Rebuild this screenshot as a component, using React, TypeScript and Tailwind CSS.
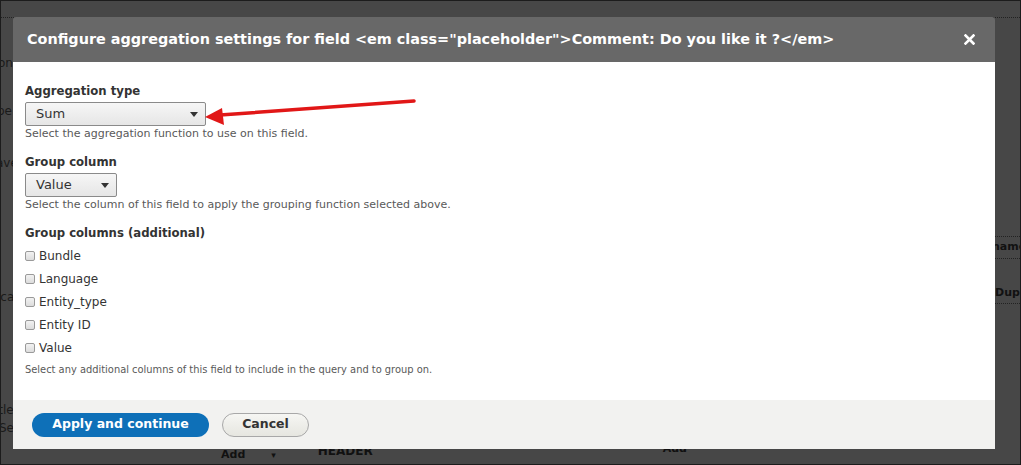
import React from 'react'

const CHECKBOXES = ['Bundle', 'Language', 'Entity_type', 'Entity ID', 'Value']

function SelectBox({ value, width }: { value: string; width: string }) {
  return (
    <div
      className={`${width} h-[24px] flex items-center justify-between pl-[10px] pr-[7px] border border-[#8a8a8a] rounded-[2px] bg-gradient-to-b from-[#f6f6f6] to-[#e6e6e6] text-[13px] text-[#333]`}
    >
      <span>{value}</span>
      <svg className="w-[8px] h-[5px]" viewBox="0 0 8 5">
        <path d="M0 0h8L4 5z" fill="#333" />
      </svg>
    </div>
  )
}

function Backdrop() {
  return (
    <div className="w-full h-full flex flex-col text-[#111] font-bold text-[11px]">
      <div className="h-[17px] border-b border-dotted border-[#222]" />
      <div className="flex-1 flex justify-between">
        <div className="w-[13px] overflow-hidden flex flex-col font-normal text-[12px] leading-[14px] text-[#1a1a1a]">
          <span className="mt-[38px] -ml-[3px]">on</span>
          <span className="mt-[34px] -ml-[4px]">pe</span>
          <span className="mt-[38px] -ml-[5px]">ave</span>
          <span className="mt-[120px] -ml-[4px]">ica</span>
          <span className="mt-[99px] -ml-[6px]">itle</span>
          <span className="mt-[4px] -ml-[2px]">Se</span>
        </div>
        <div className="w-[26px] overflow-hidden flex flex-col">
          <div className="mt-[218px] border-t border-dotted border-[#222]" />
          <span className="mt-[2px] -ml-[2px]">name</span>
          <div className="mt-[2px] border-t border-dotted border-[#222]" />
          <span className="mt-[26px] ml-[1px]">Dupl</span>
          <div className="mt-[2px] border-t border-dotted border-[#222]" />
        </div>
      </div>
      <div className="h-[16px] flex items-start leading-[14px]">
        <span className="ml-[220px]">Add</span>
        <span className="ml-[26px] text-[9px]">▾</span>
        <span className="ml-[42px] -mt-[4px] text-[12px]">HEADER</span>
        <span className="ml-[290px] -mt-[6px]">Add</span>
      </div>
    </div>
  )
}

export default function App() {
  return (
    <div className="relative w-[1021px] h-[465px] overflow-hidden bg-[#474747] border border-[#1c1c1c] font-['DejaVu_Sans','Liberation_Sans',sans-serif]">
      <Backdrop />

      <div className="absolute left-[12px] top-[16px] w-[982px] h-[432px] flex flex-col rounded-t-[3px] overflow-hidden">
        <div className="h-[45px] shrink-0 bg-[#686868] flex items-center justify-between pl-[14px] pr-[20px] text-white font-bold text-[14.4px]">
          <span>Configure aggregation settings for field &lt;em class="placeholder"&gt;Comment: Do you like it ?&lt;/em&gt;</span>
          <svg className="w-[11px] h-[11px]" viewBox="0 0 11 11">
            <path d="M1.5 1.5l8 8M9.5 1.5l-8 8" stroke="#fff" strokeWidth={2.6} strokeLinecap="square" />
          </svg>
        </div>

        <div className="flex-1 bg-white pl-[12px] pt-[22px] text-[#333]">
          <div className="text-[11.7px] leading-[15px] font-bold">Aggregation type</div>
          <div className="mt-[3px]">
            <SelectBox value="Sum" width="w-[181px]" />
          </div>
          <div className="mt-[1px] text-[11px] leading-[14px] text-[#595959]">
            Select the aggregation function to use on this field.
          </div>

          <div className="mt-[14px] text-[11.7px] leading-[15px] font-bold">Group column</div>
          <div className="mt-[3px]">
            <SelectBox value="Value" width="w-[92px]" />
          </div>
          <div className="mt-[1px] text-[11px] leading-[14px] text-[#595959]">
            Select the column of this field to apply the grouping function selected above.
          </div>

          <div className="mt-[14px] text-[11.7px] leading-[15px] font-bold">Group columns (additional)</div>
          <div className="mt-[7px] flex flex-col gap-[7px]">
            {CHECKBOXES.map((label) => (
              <label key={label} className="flex items-center gap-[4px] h-[16px] text-[12px] text-[#333]">
                <span className="w-[10px] h-[10px] rounded-[2px] border border-[#9a9a9a] bg-gradient-to-b from-[#f2f2f2] to-[#dcdcdc]" />
                {label}
              </label>
            ))}
          </div>
          <div className="mt-[7px] text-[9.9px] leading-[14px] text-[#595959]">
            Select any additional columns of this field to include in the query and to group on.
          </div>
        </div>

        <div className="h-[49px] shrink-0 bg-[#f2f2f0] flex items-center pl-[19px] gap-[13px]">
          <button className="h-[24px] w-[177px] rounded-full bg-[#0e70b8] text-white font-bold text-[12.5px] flex items-center justify-center">
            Apply and continue
          </button>
          <button className="h-[24px] w-[87px] rounded-full border border-[#a8a8a8] bg-gradient-to-b from-[#f6f6f3] to-[#e6e6e0] text-[#333] font-bold text-[12.5px] flex items-center justify-center">
            Cancel
          </button>
        </div>
      </div>

      <svg className="absolute left-0 top-0 pointer-events-none" width="1021" height="465">
        <path d="M413 100L219 114" stroke="#e11717" strokeWidth={3.5} strokeLinecap="round" />
        <polygon points="204,116 221,107 223,124" fill="#e11717" />
      </svg>
    </div>
  )
}
